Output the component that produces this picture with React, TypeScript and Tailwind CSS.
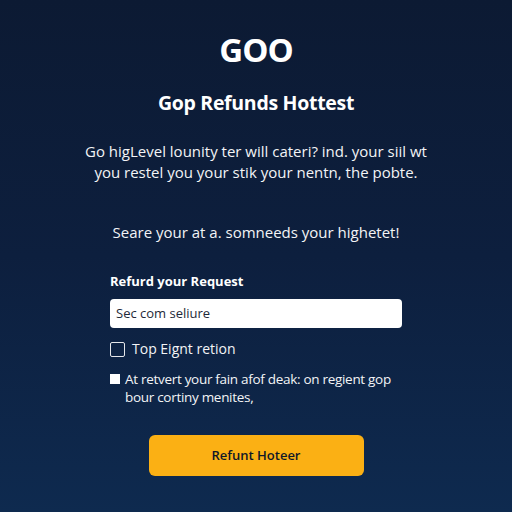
export default function App() {
  return (
    <main
      className="flex min-h-[512px] w-[512px] flex-col items-center bg-gradient-to-b from-[#0c1a33] via-[#0d1f3e] to-[#0e2a4f] text-white"
      style={{ fontFamily: '"Open Sans", "Noto Sans", sans-serif' }}
    >
      <h1 className="mt-[30px] text-[33px] font-bold leading-[40px] tracking-[-1px]">GOO</h1>
      <h2 className="mt-[20px] text-[19.5px] font-bold leading-[26px] tracking-[-0.3px]">
        Gop Refunds Hottest
      </h2>
      <p className="mt-[25px] w-[350px] text-center text-[15px] leading-[21px] text-gray-100">
        Go higLevel lounity ter will cateri? ind. your siil wt you restel you your stik your nentn, the pobte.
      </p>
      <p className="mt-[38px] text-[15px] leading-[22px] text-gray-100">
        Seare your at a. somneeds your highetet!
      </p>

      <section className="mt-[29px] flex w-[292px] flex-col">
        <label className="text-[13px] font-bold leading-[18px]">Refurd your Request</label>
        <div className="mt-[9px] flex h-[29px] items-center rounded-[4px] bg-white px-[6px] text-[13px] text-gray-800">
          Sec com seliure
        </div>

        <div className="mt-[11px] flex items-center gap-[7px]">
          <span className="h-[15px] w-[15px] rounded-[2px] border-[1.5px] border-gray-200" />
          <span className="text-[14px] leading-[20px] text-gray-100">Top Eignt retion</span>
        </div>

        <div className="mt-[11px] flex gap-[5px]">
          <span className="mt-[4px] h-[10px] w-[10px] shrink-0 bg-white" />
          <p className="text-[13.5px] leading-[18px] tracking-[-0.3px] text-gray-100">
            At retvert your fain afof deak: on regient gop bour cortiny menites,
          </p>
        </div>
      </section>

      <button className="mt-[29px] flex h-[41px] w-[215px] items-center justify-center rounded-[6px] bg-[#fbb014] text-[13px] font-semibold text-gray-900">
        Refunt Hoteer
      </button>
    </main>
  );
}
